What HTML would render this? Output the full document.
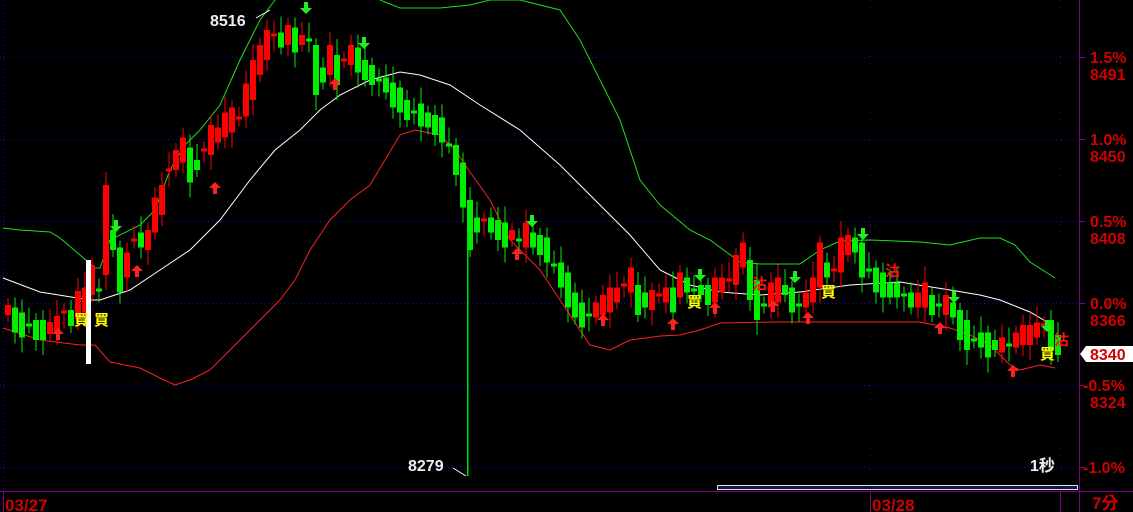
<!DOCTYPE html>
<html><head><meta charset="utf-8">
<style>
html,body{margin:0;padding:0;background:#000;width:1133px;height:512px;overflow:hidden}
svg{display:block}
text{font-family:"Liberation Sans","Noto Sans CJK TC",sans-serif;font-weight:bold}
</style></head>
<body>
<svg id="s" width="1133" height="512" viewBox="0 0 1133 512" xmlns="http://www.w3.org/2000/svg">
<rect width="1133" height="512" fill="#000"/>
<g stroke="#1010c0" stroke-width="1" stroke-dasharray="1,3">
<line x1="0" y1="57.5" x2="1078" y2="57.5"/>
<line x1="0" y1="139.5" x2="1078" y2="139.5"/>
<line x1="0" y1="221.5" x2="1078" y2="221.5"/>
<line x1="0" y1="303.5" x2="1078" y2="303.5"/>
<line x1="0" y1="385.5" x2="1078" y2="385.5"/>
<line x1="0" y1="467.5" x2="1078" y2="467.5"/>
<line x1="3.5" y1="0" x2="3.5" y2="490"/>
<line x1="870.5" y1="0" x2="870.5" y2="490" stroke-dasharray="1,6"/>
<line x1="1060.5" y1="0" x2="1060.5" y2="490" stroke-dasharray="1,6"/>
</g>
<g stroke="#800080" stroke-width="1">
<line x1="1079.5" y1="0" x2="1079.5" y2="512"/>
<line x1="0" y1="491.5" x2="1133" y2="491.5"/>
<line x1="3.5" y1="491" x2="3.5" y2="512"/>
<line x1="870.5" y1="491" x2="870.5" y2="512"/>
<line x1="1060.5" y1="491" x2="1060.5" y2="512"/>
</g>
<g stroke="#800080"><line x1="1079" y1="57.5" x2="1085" y2="57.5"/><line x1="1079" y1="139.5" x2="1085" y2="139.5"/><line x1="1079" y1="221.5" x2="1085" y2="221.5"/><line x1="1079" y1="303.5" x2="1085" y2="303.5"/><line x1="1079" y1="385.5" x2="1085" y2="385.5"/><line x1="1079" y1="467.5" x2="1085" y2="467.5"/></g>
<g id="bands" fill="none" stroke-width="1"></g>
<g id="candles" shape-rendering="crispEdges"></g>
<rect x="86" y="260" width="5" height="104" fill="#fff"/>
<rect x="467" y="230" width="1.5" height="246" fill="#00e000"/>
<polyline points="453,468 466,476" stroke="#fff" fill="none"/>
<polyline points="256,18 270,10" stroke="#fff" fill="none"/>
<text x="210" y="26" fill="#eee" font-size="16">8516</text>
<text x="408" y="471" fill="#eee" font-size="16">8279</text>
<text x="1030" y="471" fill="#eee" font-size="16">1秒</text>
<g fill="#ffff00" font-size="15">
<text x="74" y="325">買</text><text x="94" y="325">買</text>
<text x="687" y="307">買</text><text x="821" y="297">買</text><text x="1040" y="359">買</text>
</g>
<g fill="#ff1010" font-size="15">
<text x="752" y="289">沽</text><text x="885" y="276">沽</text><text x="1054" y="345">沽</text>
</g>
<g id="arrows"></g>
<rect x="717.5" y="485.5" width="360" height="4" fill="#0b1a4a" stroke="#e0e0e0"/>
<g fill="#d00000" font-size="16">
<text x="1090" y="63">1.5%</text><text x="1090" y="80">8491</text>
<text x="1090" y="145">1.0%</text><text x="1090" y="162">8450</text>
<text x="1090" y="227">0.5%</text><text x="1090" y="244">8408</text>
<text x="1090" y="309">0.0%</text><text x="1090" y="326">8366</text>
<text x="1083" y="391">-0.5%</text><text x="1090" y="408">8324</text>
<text x="1083" y="473">-1.0%</text>
<text x="5" y="511" font-size="17">03/27</text>
<text x="872" y="511" font-size="17">03/28</text>
<text x="1092" y="509" font-size="17">7分</text>
</g>
<polygon points="1080,354 1086,346 1133,346 1133,362 1086,362" fill="#fff"/>
<text x="1090" y="360" fill="#d00000" font-size="16">8340</text>
</svg>
<script>
(function(){
var NS="http://www.w3.org/2000/svg";
function el(p,t,a){var e=document.createElementNS(NS,t);for(var k in a)e.setAttribute(k,a[k]);p.appendChild(e);return e;}
var cy=[310,320,325,325,330,330,328,325,312,318,305,300,280,290,230,240,270,265,240,240,240,215,200,170,160,150,165,165,150,140,135,125,120,118,100,80,60,45,35,40,35,40,40,40,70,75,60,70,60,55,60,70,75,80,85,95,100,110,112,115,120,125,130,145,160,185,225,225,220,225,230,235,235,240,235,240,245,250,265,275,290,305,315,315,310,305,300,295,285,280,300,300,300,295,295,300,285,285,290,290,295,290,285,280,270,255,280,300,305,295,290,290,300,305,300,290,265,270,270,255,245,245,260,270,280,285,290,290,295,300,300,295,305,305,305,310,325,335,340,340,345,345,345,345,340,335,335,330,325,335,345];
var g=document.getElementById('candles');
var prev=cy[0];
for(var i=0;i<cy.length;i++){
 var x=5+i*7, c=cy[i];
 var up=c<prev || (c==prev && i%2==0);
 var col=up?'#ff0000':'#00ee00';
 var h=Math.max(4,Math.abs(c-prev)+10+(i%3)*5);
 if(i==14)h=90;
 if(i%5==3)h=3;
 var ty=c-h/2;
 el(g,'rect',{x:x+2.5,y:ty-7-(i%4)*3,width:1,height:h+14+(i%4)*3+(i%3)*4,fill:col});
 el(g,'rect',{x:x,y:ty,width:6,height:h,fill:col});
 prev=c;
}
function line(pts,col){var s=[];for(var i=0;i<pts.length;i+=2)s.push(pts[i]+','+pts[i+1]);el(document.getElementById('bands'),'polyline',{points:s.join(' '),stroke:col});}
line([3,278,40,292,90,300,100,300,130,290,160,270,190,250,220,220,250,180,275,150,300,130,320,110,340,95,370,80,400,72,420,75,450,85,480,105,520,130,560,165,600,205,630,235,660,270,690,285,720,292,760,295,800,292,850,285,900,282,950,290,980,295,1000,300,1030,312,1052,325],'#ffffff');
line([3,228,20,230,50,232,60,238,80,255,95,268,100,268,110,240,140,225,155,210,170,170,185,145,200,130,220,105,240,60,260,20,275,0],'#20dd20');
line([380,0,400,8,440,8,470,5,490,0,520,0,560,10,580,40,600,80,620,120,640,180,660,205,690,230,710,240,740,262,760,264,800,264,820,250,840,241,870,240,920,242,950,245,980,238,1000,238,1015,245,1030,262,1055,278],'#20dd20');
line([3,328,40,340,80,345,95,345,110,362,140,368,160,378,175,385,190,380,210,370,240,340,265,315,280,300,295,280,310,250,330,220,350,200,370,185,385,160,400,135,415,130,440,135,455,150,470,172,490,200,510,240,540,270,560,300,590,345,610,350,630,340,660,336,680,335,700,330,720,323,780,322,850,322,920,322,950,328,970,335,990,345,1010,365,1020,370,1040,365,1055,368],'#ff2020');
var ar=document.getElementById('arrows');
function arrow(x,y,up,col){var p=up?[x,y,x-6,y+6,x-2,y+6,x-2,y+12,x+2,y+12,x+2,y+6,x+6,y+6]:[x,y,x-6,y-6,x-2,y-6,x-2,y-12,x+2,y-12,x+2,y-6,x+6,y-6];el(ar,'polygon',{points:p.join(' '),fill:col});}
[[58,328],[137,265],[215,182],[335,78],[517,248],[603,314],[673,318],[715,302],[773,300],[808,312],[940,322],[1013,365]].forEach(function(a){arrow(a[0],a[1],true,'#ff2020');});
[[116,232],[306,14],[364,49],[532,227],[700,281],[795,283],[863,240],[954,303],[1047,332]].forEach(function(a){arrow(a[0],a[1],false,'#20ee20');});
})();
</script>
</body></html>
